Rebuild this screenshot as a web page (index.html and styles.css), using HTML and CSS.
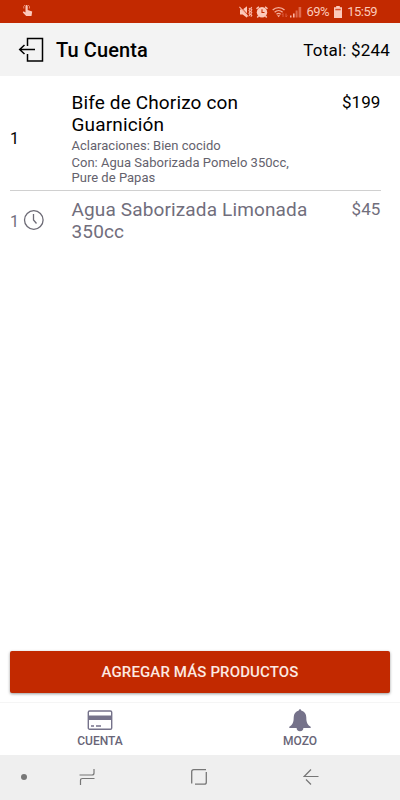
FILE: index.html
```html
<!DOCTYPE html>
<html lang="es">
<head>
  <meta charset="UTF-8">
  <meta name="viewport" content="width=device-width, initial-scale=1">
  <title>Tu Cuenta</title>
  <link rel="stylesheet" href="styles.css">
</head>
<body>
  <div class="status-bar">
    <svg class="touch-icon" width="12" height="14" viewBox="0 0 12 14">
      <path d="M3.500 2.200v6.200L1.600 7.200.8 8.400 4.200 12h5.300l.7-4.600L5.700 6V2.200a1.100 1.100 0 0 0-2.200 0z" fill="#fcc9bb"/>
      <path d="M1.800 4.500A3 3 0 0 1 3 1M6.200 1a3 3 0 0 1 1.200 3.500" fill="none" stroke="#f2a28e" stroke-width=".8"/>
    </svg>
    <div class="status-right">
      <svg class="mute-icon" width="14" height="12" viewBox="0 0 14 12">
        <path d="M1 3.500h2.700L8 .3v11.400L3.700 8.500H1z" fill="#fcc9bb"/>
        <path d="M1.300.6l8.300 9" stroke="#c22900" stroke-width="1"/>
        <path d="M.4.9l8.800 9.800M10 2l1 1.300-1 1.300 1 1.400-1 1.300 1 1.400-1 1.300M12.800 1l-1 1.400 1 1.400-1 1.400 1 1.400-1 1.400 1 1.400-1 1.300" fill="none" stroke="#fcb6a4" stroke-width="1.100"/>
      </svg>
      <svg class="alarm-icon" width="12" height="12" viewBox="0 0 12 12">
        <path d="M.5 2.800L2.900.7M11.500 2.800L9.100.7M2.500 10L1.300 11.500M9.500 10l1.200 1.500" stroke="#fcc9bb" stroke-width="1.400"/>
        <circle cx="6" cy="6.200" r="5.200" fill="#fcc9bb"/>
        <path d="M6 3.300v3.200h2.500" fill="none" stroke="#c22900" stroke-width="1.100"/>
      </svg>
      <svg class="wifi-icon" width="16" height="12" viewBox="0 0 16 12">
        <path d="M.7 4c3.300-3.300 8.500-3.300 11.800 0M2.600 6.200c2.300-2.100 5.700-2.100 8 0M4.500 8.200c1.200-1 3-1 4.200 0" fill="none" stroke="#f6b09d" stroke-width="1.300"/>
        <path d="M5 9.300h3.200l-1.600 2z" fill="#f6b09d"/>
        <path d="M11 11V7.500M9.800 9l1.200-1.500M14 7.500V11l1.200-1.500" fill="none" stroke="#dc5d3e" stroke-width="1"/>
      </svg>
      <svg class="signal-icon" width="12" height="12" viewBox="0 0 12 12">
        <path d="M0 9.500h1.500V11.500H0zM3 7.500h1.600v4H3z" fill="#fcb6a4"/>
        <path d="M5.600 4.500h2v7h-2zM8.600 1h2.600v10.500H8.600z" fill="#df6a4e"/>
      </svg>
      <span class="battery-level">69%</span>
      <svg class="battery-icon" width="8" height="12" viewBox="0 0 8 12">
        <path d="M2.200 0h3.600v1.300H8V12H0V1.300h2.200z" fill="#fcc9bb"/>
        <path d="M1.300 2.800h5.400v1.500H1.300z" fill="#d65332"/>
      </svg>
      <span class="clock">15:59</span>
    </div>
  </div>

  <div class="header">
    <svg class="exit-icon" width="26" height="26" viewBox="0 0 26 26">
      <path d="M9.500 9V1.500h15v22.500h-15V17M1.500 12.500H17M6.500 8L1.700 12.500l4.800 4.500" fill="none" stroke="#000" stroke-width="1.500"/>
    </svg>
    <h1>Tu Cuenta</h1>
    <span class="total">Total: $244</span>
  </div>

  <div class="items">
    <div class="item">
      <div class="quantity">1</div>
      <div class="detail">
        <h2>Bife de Chorizo con Guarnición</h2>
        <p class="note">Aclaraciones: Bien cocido</p>
        <p>Con: Agua Saborizada Pomelo 350cc, Pure de Papas</p>
      </div>
      <div class="price">$199</div>
    </div>
    <div class="item pending">
      <div class="quantity">
        <span>1</span>
        <svg width="22" height="22" viewBox="0 0 22 22">
          <circle cx="11.800" cy="10" r="9.300" fill="none" stroke="#6d6b76" stroke-width="1.300"/>
          <path d="M11.500 4v6l3 3.500" fill="none" stroke="#6d6b76" stroke-width="1.300"/>
        </svg>
      </div>
      <div class="detail">
        <h2>Agua Saborizada Limonada 350cc</h2>
      </div>
      <div class="price">$45</div>
    </div>
  </div>

  <button class="add-button">AGREGAR MÁS PRODUCTOS</button>

  <div class="tabs">
    <div class="tab">
      <svg width="26" height="24" viewBox="0 0 26 24">
        <rect x="1.300" y="3" width="23.400" height="18.200" rx="1.300" fill="none" stroke="#75728a" stroke-width="1.400"/>
        <path d="M1 7.500h24v4.500H1z" fill="#75728a"/>
        <path d="M4 18h3M9 18h5" stroke="#75728a" stroke-width="1.300"/>
      </svg>
      <span>CUENTA</span>
    </div>
    <div class="tab">
      <svg width="26" height="24" viewBox="0 0 26 24">
        <path d="M11.800 2.500a1.200 1.200 0 0 1 2.400 0c3.300.8 5.100 3.400 5.100 7 0 4.700 1.200 7.300 4.400 9.300v1.200H2.300v-1.200c3.200-2 4.400-4.600 4.400-9.300 0-3.600 1.800-6.200 5.100-7z" fill="#75728a"/>
        <path d="M9.600 19.800h6.800a3.400 3.400 0 0 1-6.800 0z" fill="#75728a"/>
      </svg>
      <span>MOZO</span>
    </div>
  </div>

  <div class="nav-bar">
    <span class="dot"></span>
    <svg class="recents" width="16" height="18" viewBox="0 0 16 18">
      <path d="M.5 7H13q2 0 2-2V1M15.500 10.500h-12q-2 0-2 2V17" fill="none" stroke="#777" stroke-width="1.200"/>
    </svg>
    <svg class="home" width="16" height="16" viewBox="0 0 16 16">
      <path d="M.7 14.500V2.700q0-2 2-2H15M4 15.200h9.300q2 0 2-2V3" fill="none" stroke="#777" stroke-width="1.300"/>
    </svg>
    <svg class="back" width="16" height="16" viewBox="0 0 16 16">
      <path d="M8 .5L1.200 7.500H15.500M3 10.500l5 5" fill="none" stroke="#777" stroke-width="1.200"/>
    </svg>
  </div>
</body>
</html>
```
FILE: styles.css
```css
* {
  box-sizing: border-box;
}

body {
  margin: 0;
  height: 800px;
  display: flex;
  flex-direction: column;
  font-family: Roboto, sans-serif;
  background-color: #fff;
  color: #000;
}

h1, h2, p {
  margin: 0;
}

svg {
  display: block;
  flex-shrink: 0;
}

.status-bar {
  height: 23px;
  padding: 0 23px 0 22px;
  display: flex;
  align-items: center;
  justify-content: space-between;
  background-color: #c22900;
  color: #fcc9bb;
  font-size: 13px;
  letter-spacing: -0.5px;
}

.touch-icon {
  margin-top: -1px;
}

.status-right {
  display: flex;
  align-items: center;
}

.alarm-icon {
  margin-left: 3px;
}

.wifi-icon {
  margin-left: 4px;
}

.signal-icon {
  margin-left: 2px;
}

.battery-level {
  margin-left: 4px;
}

.battery-icon {
  margin: 0 5px;
}

.header {
  height: 53px;
  padding: 0 10px 0 18px;
  display: flex;
  align-items: center;
  background-color: #f3f3f3;
}

h1 {
  margin-left: 12px;
  font-size: 20px;
  font-weight: 500;
  letter-spacing: 0.1px;
}

.total {
  margin-left: auto;
  font-size: 17px;
  letter-spacing: 0.2px;
}

.items {
  flex: 1;
  padding: 16px 19px 0 10px;
}

.item {
  display: flex;
  padding-bottom: 5px;
  border-bottom: 1px solid #d0d0d0;
}

.quantity {
  width: 61.5px;
  display: flex;
  align-items: center;
  gap: 3px;
  font-size: 16px;
}

.detail {
  width: 240px;
}

h2 {
  font-size: 19px;
  font-weight: 400;
  line-height: 22px;
  letter-spacing: 0.14px;
}

p {
  font-size: 13px;
  line-height: 15px;
  letter-spacing: 0.02px;
  color: #64626d;
}

.note {
  margin: 2px 0;
}

.price {
  margin-left: auto;
  padding-right: 0.5px;
  font-size: 17px;
  line-height: 20px;
  letter-spacing: 0.1px;
}

.pending {
  padding-top: 8px;
  border-bottom: none;
  color: #716e7c;
}

.add-button {
  height: 42px;
  margin: 0 10px 9px;
  padding: 0;
  border: none;
  border-radius: 2px;
  background-color: #c22900;
  box-shadow: 0 1px 3px rgba(0, 0, 0, 0.4);
  color: #fce9e2;
  font-family: inherit;
  font-size: 15px;
  font-weight: 500;
  letter-spacing: 0.13px;
}

.tabs {
  height: 53px;
  display: flex;
  border-top: 1px solid #f5f5f5;
}

.tab {
  flex: 1;
  display: flex;
  flex-direction: column;
  align-items: center;
  padding-top: 5px;
  color: #686577;
  font-size: 12px;
  font-weight: 500;
  line-height: 18px;
}

.nav-bar {
  height: 45px;
  padding-bottom: 1px;
  display: flex;
  align-items: center;
  background-color: #efefef;
}

.dot {
  width: 6px;
  height: 6px;
  margin-left: 21px;
  border-radius: 50%;
  background-color: #777;
}

.recents {
  margin-left: 52px;
}

.home {
  margin-left: 96px;
}

.back {
  margin-left: 96px;
}
```
